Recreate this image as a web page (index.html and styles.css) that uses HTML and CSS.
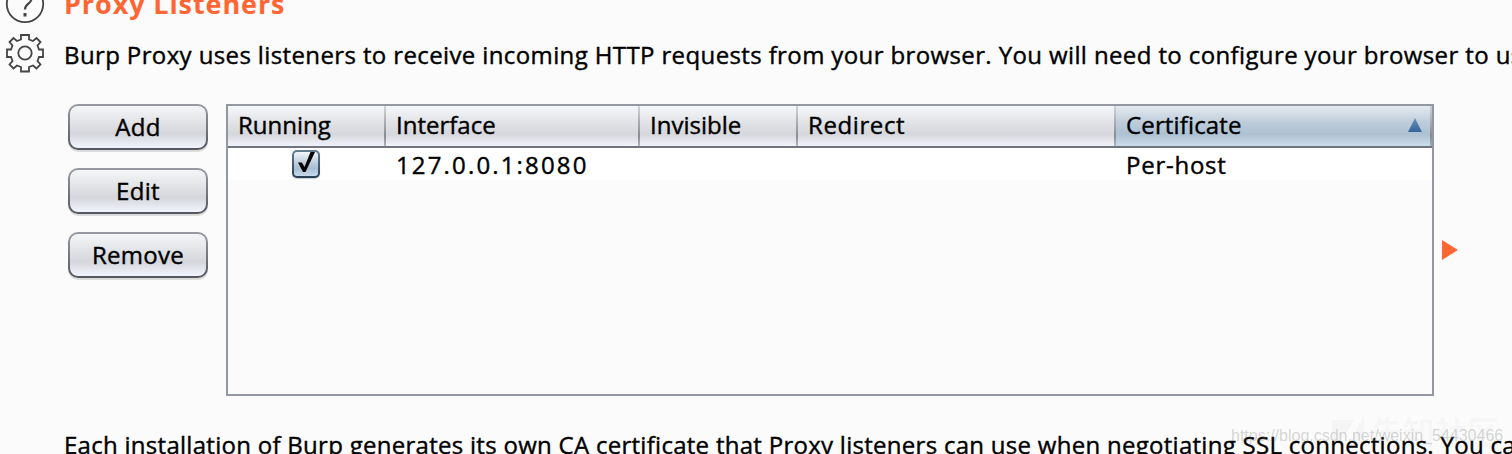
FILE: index.html
```html
<!DOCTYPE html>
<html lang="en">
<head>
<meta charset="utf-8">
<title>Proxy Listeners</title>
<link rel="stylesheet" href="styles.css">
</head>
<body>
<main class="panel">
  <aside class="tools">
    <svg class="help" width="40" height="40" viewBox="0 0 40 40" fill="none" stroke="#454545" stroke-width="1.8">
      <circle cx="20" cy="20" r="18.2"/>
      <path d="M14.5 15C14.5 6.500 26.500 7 26.500 14.500C26.500 20 20 19.500 20 25.500" stroke-width="2.200"/>
      <path d="M20 29v3.500" stroke-width="3"/>
    </svg>
    <svg class="gear" width="40" height="40" viewBox="0 0 40 40" fill="none" stroke="#454545" stroke-width="1.8">
      <path d="M16 2h8v4.500l4 1.500 3.500-3 4 4-3 3.500 1.500 4h4v7.500h-4l-1.500 4 3 3.500-4 4-3.500-3-4 1.500v4.500h-8v-4.500l-4-1.500-3.500 3-4-4 3-3.500-1.500-4h-4v-7.500h4l1.500-4-3-3.500 4-4 3.500 3 4-1.500z"/>
      <circle cx="20" cy="20" r="6.700"/>
    </svg>
  </aside>
  <section class="content">
    <h1 class="title">Proxy Listeners</h1>
    <p class="intro">Burp Proxy uses listeners to receive incoming HTTP requests from your browser. You will need to configure your browser to use one of the listeners as its proxy server.</p>
    <div class="listeners">
      <div class="actions">
        <button class="btn">Add</button>
        <button class="btn">Edit</button>
        <button class="btn">Remove</button>
      </div>
      <div class="table">
        <div class="row head">
          <div class="cell">Running</div>
          <div class="cell">Interface</div>
          <div class="cell">Invisible</div>
          <div class="cell redirect">Redirect</div>
          <div class="cell sorted">Certificate<svg class="arrow" width="14" height="14" viewBox="0 0 14 14"><defs><linearGradient id="sort" x2="0" y2="1"><stop stop-color="#6a93be"/><stop offset="1" stop-color="#33639a"/></linearGradient></defs><path d="M7 0l7 14H0z" fill="url(#sort)"/></svg></div>
        </div>
        <div class="row data">
          <div class="cell check"><span class="box"><svg width="28" height="28" viewBox="0 0 28 28"><path d="M6 12.500h4l2.500 4.500L18.500 2h4.500L13.500 22h-2.500z" fill="#000"/></svg></span></div>
          <div class="cell address">127.0.0.1:8080</div>
          <div class="cell"></div>
          <div class="cell"></div>
          <div class="cell host">Per-host</div>
        </div>
      </div>
      <svg class="marker" width="16" height="20" viewBox="0 0 16 20"><path d="M0 0l16 10L0 20z" fill="#ff6633"/></svg>
    </div>
    <p class="note">Each installation of Burp generates its own CA certificate that Proxy listeners can use when negotiating SSL connections. You can import or export this certificate.</p>
  </section>
  <div class="brand"><svg width="34" height="31" viewBox="0 0 34 31"><path d="M0 5h22L6 31H0zM32 0v31H16z" fill="currentColor"/></svg>先知社区</div>
  <div class="credit">https://blog.csdn.net/weixin_54430466</div>
</main>
</body>
</html>
```
FILE: styles.css
```css
* { box-sizing: border-box; }
body { margin: 0; background: #fbfbfb; color: #000; overflow: hidden; }
.panel { position: relative; display: flex; width: 1512px; height: 454px; overflow: hidden; font: 24px/32px "Open Sans", sans-serif; letter-spacing: 0.6px; -webkit-text-stroke: 0.4px; font-variant-ligatures: none; }
.tools { flex: 0 0 64px; display: flex; flex-direction: column; padding-left: 5px; }
.help { margin-top: -16px; }
.gear { margin-top: 9px; }
.content { flex: none; width: 1448px; white-space: nowrap; }
.title { margin: -14px 0 0; color: #ff6633; font-size: 27px; line-height: 36px; font-weight: 700; letter-spacing: 0.9px; -webkit-text-stroke: 0; }
.intro { margin: 17px 0 0; letter-spacing: 0.38px; }
.listeners { display: flex; height: 292px; margin-top: 33px; padding-left: 4px; }
.actions { display: flex; flex-direction: column; gap: 18px; width: 158px; }
.btn { width: 140px; height: 46px; padding: 0 0 1px; border: 2px solid transparent; border-radius: 10px; font: inherit; color: #000; letter-spacing: 0.3px;
  background: linear-gradient(#f5f6f7, #dedfe3 48%, #d5d6db 65%, #f2f4fd) padding-box, linear-gradient(#989ba2, #54575f) border-box; box-shadow: 0 2px 0 #dcdcdc; }
.table { width: 1208px; border: 2px solid #9297a1; }
.row { display: grid; grid-template-columns: 158px 254px 158px 318px 316px; }
.cell { padding-left: 10px; }
.head { height: 42px; border-bottom: 2px solid #70747e; line-height: 38px; letter-spacing: 0; background: linear-gradient(#f6f7fa, #dfe1e5 45%, #d6d7dc 70%, #f1f3fb); }
.head .cell { height: 40px; background: linear-gradient(#d2d4d8, #888b91 75%, #b3b5ba) right / 2px 100% no-repeat; }
.head .sorted { display: flex; justify-content: space-between; padding-right: 10px; letter-spacing: 0.15px; background: linear-gradient(#ccd1d8, #858b94 75%, #a4adb7) right / 2px 100% no-repeat, linear-gradient(#e4eaf0, #bdccda 42%, #adc1d2 70%, #cbddeb); }
.redirect { letter-spacing: 0.6px; }
.arrow { margin-top: 12px; }
.data { height: 32px; line-height: 34px; background: #fff; }
.check { display: flex; padding: 2px 0 0 64px; }
.box { width: 28px; height: 28px; border: 2px solid transparent; border-radius: 5px; box-shadow: 0 1px 1px #c4cbd3; background: linear-gradient(#f1f5f8, #b8cad9 50%, #a9bfd1 68%, #c6dbed) padding-box, linear-gradient(#647f96, #263e54) border-box; }
.box svg { display: block; margin: -2px; overflow: visible; }
.address { letter-spacing: 2.15px; }
.host { letter-spacing: 0.75px; }
.marker { margin: 136px 0 0 8px; }
.note { margin: 33px 0 0; letter-spacing: 0.28px; }
.brand { position: absolute; left: 1332px; top: 414px; display: flex; align-items: center; gap: 5px; color: rgba(100, 100, 100, 0.04); font: 700 32px/32px "Noto Sans CJK SC", sans-serif; letter-spacing: 0; -webkit-text-stroke: 0; white-space: nowrap; }
.credit { position: absolute; left: 1231px; top: 427px; color: rgba(130, 130, 130, 0.32); font: 16px/18px "Liberation Sans", sans-serif; letter-spacing: 0; -webkit-text-stroke: 0; white-space: nowrap; }
```
